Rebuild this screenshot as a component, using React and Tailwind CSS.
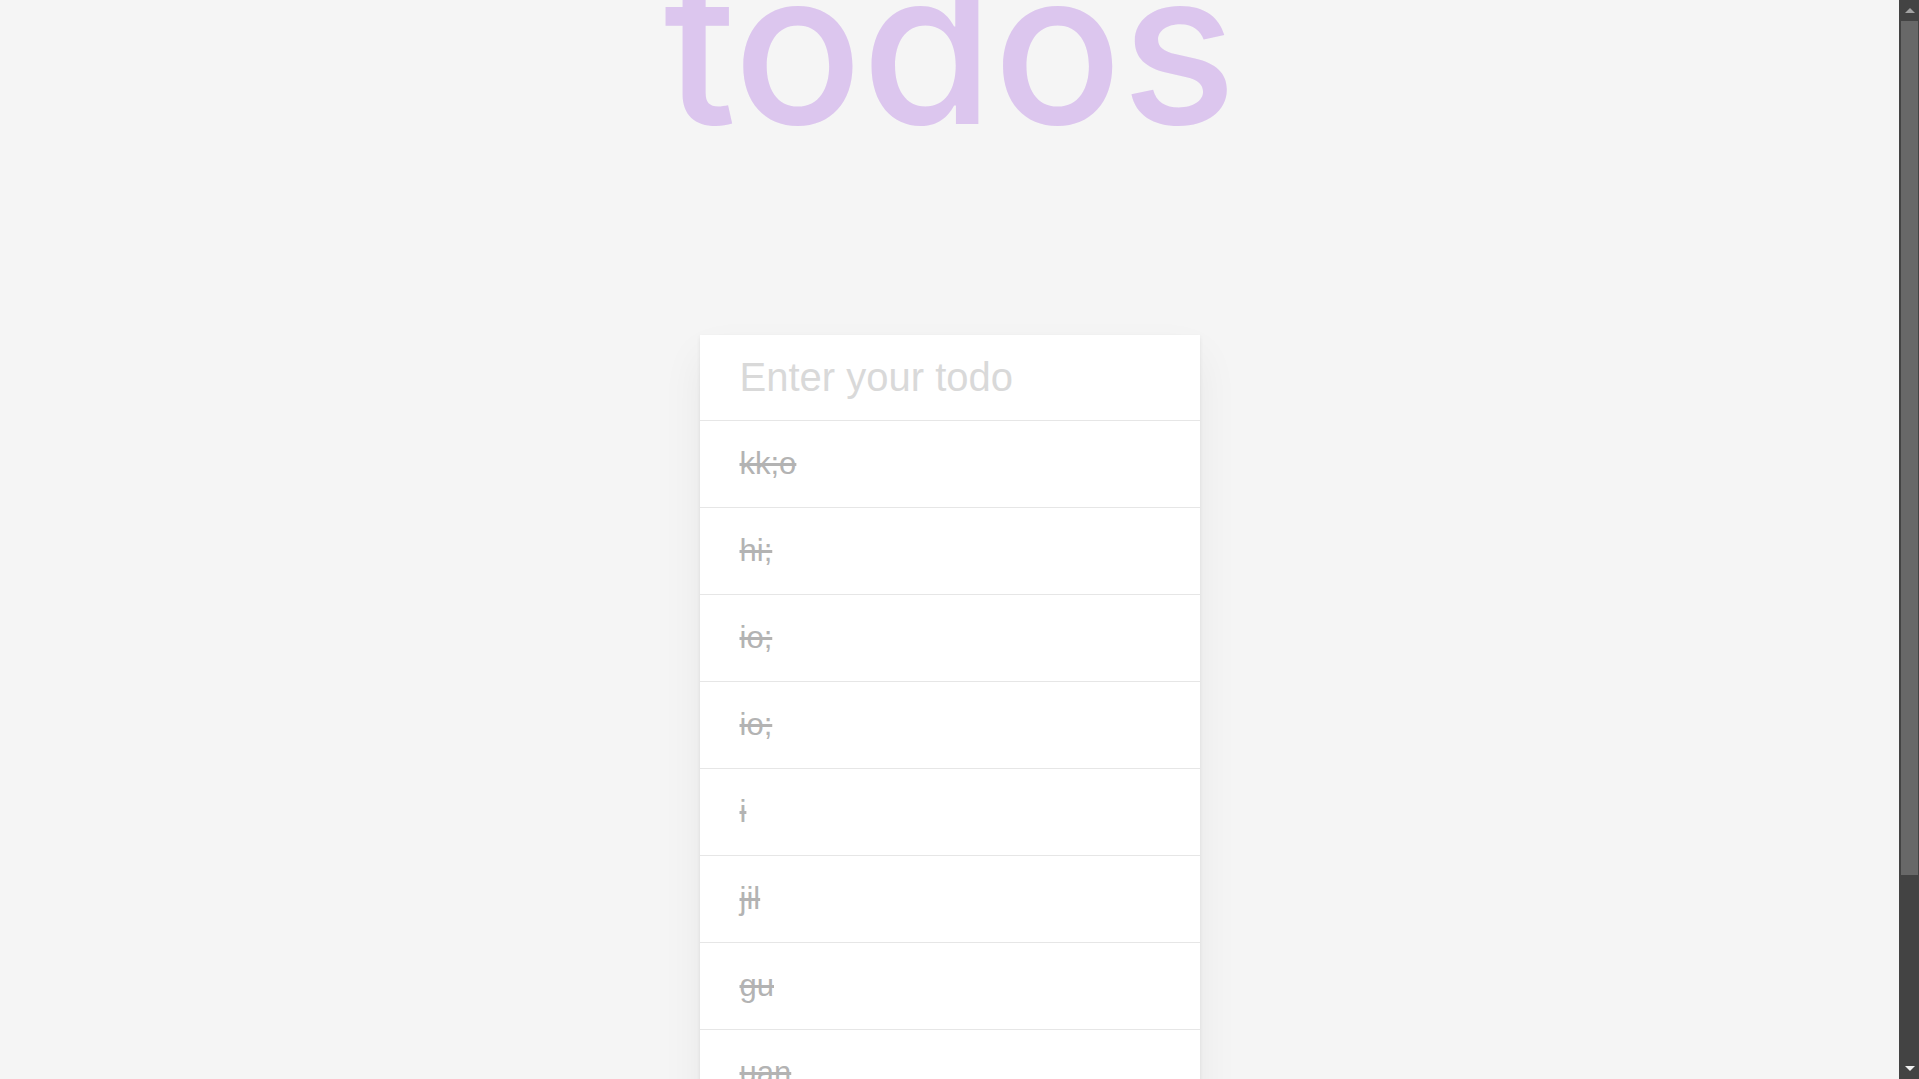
import { useState } from "react";

const initialTodos = ["kk;o", "hi;", "io;", "io;", "i", "jil", "gu", "uan", "hi", "ok"];

// window scrollbar as it shows in the capture (dark theme, scrolled to top)
function Scrollbar() {
  return (
    <div className="flex w-[20px] shrink-0 flex-col bg-[#434343]">
      <div className="flex h-[21px] items-center justify-center pl-[2px]">
        <div className="h-0 w-0 border-x-[5px] border-b-[5px] border-x-transparent border-b-[#a3a3a3]" />
      </div>
      <div className="flex-1 pl-[2px] pr-[1px]">
        <div className="h-[854px] bg-[#686868]" />
      </div>
      <div className="flex h-[21px] items-center justify-center pl-[2px]">
        <div className="h-0 w-0 border-x-[5px] border-t-[5px] border-x-transparent border-t-[#f0f0f0]" />
      </div>
    </div>
  );
}

export default function App() {
  const [todos] = useState(initialTodos);
  const [text, setText] = useState("");

  return (
    <div className="flex h-screen overflow-hidden bg-[#f5f5f5]">
      <main className="flex-1 overflow-y-auto [scrollbar-width:none]">
        <div className="flex flex-col items-center pb-[25px]">
          <h1 className="mt-[-60px] font-['Inter',sans-serif] text-[214px] font-medium leading-none tracking-[-1px] text-[#dcc6ee] select-none">
            todos
          </h1>
          <div className="mt-[181px] w-[500px] bg-white shadow-[0_2px_4px_rgba(0,0,0,0.08),0_20px_40px_rgba(0,0,0,0.06)]">
            <input
              value={text}
              onChange={(e) => setText(e.target.value)}
              placeholder="Enter your todo"
              className="block h-[86px] w-full border-b border-[#e6e6e6] bg-white px-10 font-['Liberation_Sans',Arial,sans-serif] text-[40px] text-[#4d4d4d] outline-none placeholder:text-[#d9d9d9]"
            />
            <ul>
              {todos.map((todo, i) => (
                <li
                  key={i}
                  className="flex h-[87px] items-center border-b border-[#e6e6e6] px-10 font-['Liberation_Sans',Arial,sans-serif] text-[31px] text-[#b3b3b3] line-through"
                >
                  {todo}
                </li>
              ))}
            </ul>
          </div>
        </div>
      </main>
      <Scrollbar />
    </div>
  );
}
